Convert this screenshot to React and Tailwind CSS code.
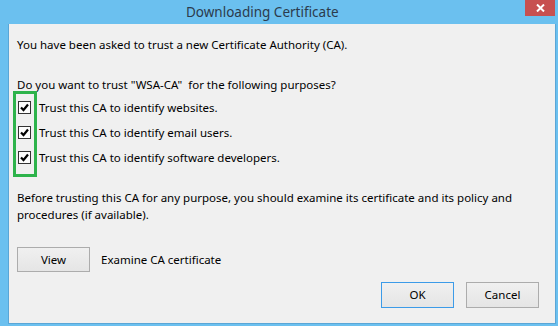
import React from 'react';

const purposes = [
  'Trust this CA to identify websites.',
  'Trust this CA to identify email users.',
  'Trust this CA to identify software developers.',
];

function CheckBox() {
  return (
    <span className="w-[13px] h-[13px] shrink-0 border border-[#333333] bg-[#fcfcfc] flex items-center justify-center">
      <svg width="9" height="9" viewBox="0 0 9 9">
        <path d="M1 4.5 L3.5 7 L8 1.5" fill="none" stroke="#000" strokeWidth="2.2" />
      </svg>
    </span>
  );
}

function Button({ children, focused }) {
  return (
    <button
      className={`w-[73px] h-[26px] text-[11.5px] text-black bg-gradient-to-b from-[#f0f0f0] to-[#e5e5e5] border ${
        focused ? 'border-[#3c9be8]' : 'border-[#acacac]'
      }`}
    >
      {children}
    </button>
  );
}

export default function App() {
  return (
    <div
      className="w-[558px] h-[326px] bg-[#6bc0ef] flex flex-col overflow-hidden"
      style={{ fontFamily: '"Noto Sans", "Open Sans", sans-serif' }}
    >
      <div className="h-[24px] shrink-0 flex items-start">
        <div className="flex-1 pl-[186px] pt-[2px] text-[13.5px] leading-[20px] text-[#2b3b4c]">
          Downloading Certificate
        </div>
        <div className="w-[30px] h-[16px] mr-[3px] bg-[#c75050] flex items-center justify-center">
          <svg width="9" height="8" viewBox="0 0 9 8">
            <path d="M1 0.5 L8 7.5 M8 0.5 L1 7.5" stroke="#fff" strokeWidth="2" />
          </svg>
        </div>
      </div>

      <div className="relative ml-[8px] mr-[2px] mb-[2px] flex-1 bg-[#f0f0f0] border border-[#5aa6d6] border-t-0 pl-[8px] pr-[16px] pt-[13px] text-[11.5px] text-black">
        <p className="leading-[16px]">You have been asked to trust a new Certificate Authority (CA).</p>
        <p className="leading-[16px] mt-[24px]">Do you want to trust "WSA-CA"&nbsp; for the following purposes?</p>

        <div className="mt-[2px] flex flex-col">
          {purposes.map((p) => (
            <div key={p} className="h-[25px] flex items-center gap-[8px] pl-[1px]">
              <CheckBox />
              <span>{p}</span>
            </div>
          ))}
        </div>

        <div className="absolute left-[4px] top-[67px] w-[24px] h-[86px] border-[3px] border-[#2db34b]" />

        <p className="mt-[19px] leading-[17px] whitespace-nowrap">
          Before trusting this CA for any purpose, you should examine its certificate and its policy and
          <br />
          procedures (if available).
        </p>

        <div className="mt-[24px] flex items-center gap-[11px]">
          <button className="w-[73px] h-[25px] text-[11.5px] bg-gradient-to-b from-[#f0f0f0] to-[#e5e5e5] border border-[#acacac]">
            View
          </button>
          <span>Examine CA certificate</span>
        </div>

        <div className="mt-[10px] flex justify-end gap-[12px]">
          <Button focused>OK</Button>
          <Button>Cancel</Button>
        </div>
      </div>
    </div>
  );
}
